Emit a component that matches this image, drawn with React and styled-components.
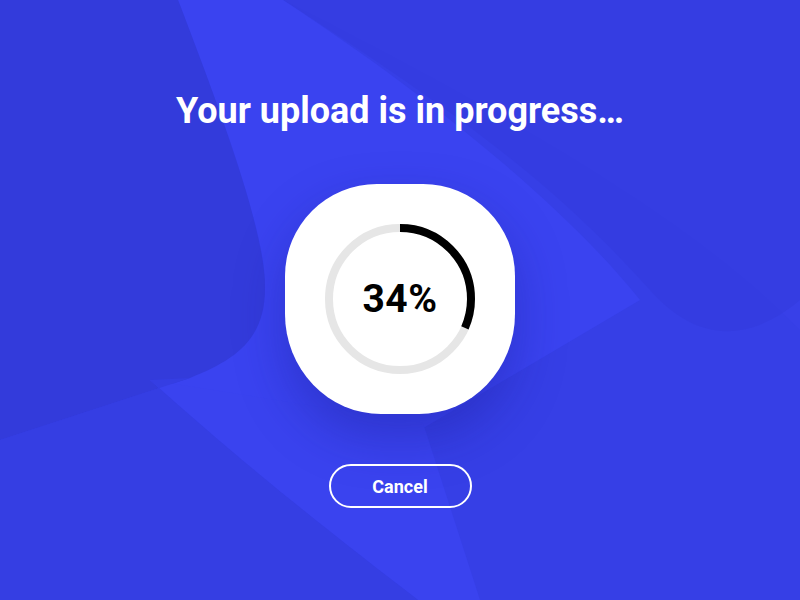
import React from "react";
import styled, { createGlobalStyle } from "styled-components";

const Global = createGlobalStyle`
  html, body {
    margin: 0;
    padding: 0;
  }
  body {
    font-family: Roboto, "Liberation Sans", sans-serif;
  }
`;

const RADIUS = 71;
const CIRC = 2 * Math.PI * RADIUS;

const Page = styled.div`
  position: relative;
  width: 800px;
  height: 600px;
  overflow: hidden;
  background: #363fe6;
`;

const Backdrop = styled.svg`
  position: absolute;
  inset: 0;
  width: 100%;
  height: 100%;
`;

const Content = styled.main`
  position: relative;
  display: flex;
  flex-direction: column;
  align-items: center;
  padding-top: 91px;
`;

const Title = styled.h1`
  margin: 0;
  font-size: 36px;
  line-height: 40px;
  font-weight: 700;
  color: #ffffff;
`;

const Card = styled.section`
  margin-top: 53px;
  width: 230px;
  height: 230px;
  border-radius: 92px 92px 96px 96px / 92px 92px 100px 100px;
  background: #ffffff;
  box-shadow: 0 22px 50px rgba(22, 26, 140, 0.35);
  display: grid;
  place-items: center;
`;

const Ring = styled.div`
  position: relative;
  width: 160px;
  height: 160px;
  display: grid;
  place-items: center;
`;

const RingSvg = styled.svg`
  position: absolute;
  inset: 0;
  transform: rotate(-90deg);
`;

const Percent = styled.span`
  position: relative;
  font-size: 39px;
  font-weight: 700;
  color: #000000;
  letter-spacing: 0.5px;
`;

const CancelButton = styled.button`
  margin-top: 50px;
  width: 143px;
  height: 44px;
  border: 2px solid #ffffff;
  border-radius: 22px;
  background: transparent;
  color: #ffffff;
  font-family: Roboto, "Liberation Sans", sans-serif;
  font-size: 18px;
  font-weight: 700;
  cursor: pointer;
`;

function Progress({ fraction, label }) {
  return (
    <Ring>
      <RingSvg width="160" height="160" viewBox="0 0 160 160">
        <circle cx="80" cy="80" r={RADIUS} fill="none" stroke="#e6e6e6" strokeWidth="8" />
        <circle
          cx="80"
          cy="80"
          r={RADIUS}
          fill="none"
          stroke="#000"
          strokeWidth="8"
          strokeDasharray={`${CIRC * fraction} ${CIRC}`}
        />
      </RingSvg>
      <Percent>{label}</Percent>
    </Ring>
  );
}

export default function App() {
  return (
    <Page>
      <Global />
      <Backdrop viewBox="0 0 800 600" preserveAspectRatio="none">
        <path d="M283 0 L800 0 L800 330 C720 250 600 160 283 0 Z" fill="#3840e8" />
        <path d="M283 0 C470 120 560 190 650 290 C690 335 740 350 800 300 L800 0 Z" fill="#333bdd" opacity="0.55" />
        <path d="M178 0 L283 0 C420 90 560 200 640 300 L420 430 L150 380 C230 350 265 330 265 285 C265 230 220 110 178 0 Z" fill="#3a43f0" />
        <path d="M0 0 L178 0 C220 110 265 230 265 288 C265 340 235 360 190 378 L0 440 Z" fill="#333bdb" />
        <path d="M150 380 C250 470 340 540 418 600 L480 600 L423 423 Z" fill="#3a43ef" />
        <path d="M0 440 L190 378 L150 380 C250 470 340 540 418 600 L0 600 Z" fill="#353ee3" />
      </Backdrop>
      <Content>
        <Title>Your upload is in progress…</Title>
        <Card>
          <Progress fraction={0.316} label="34%" />
        </Card>
        <CancelButton type="button">Cancel</CancelButton>
      </Content>
    </Page>
  );
}
